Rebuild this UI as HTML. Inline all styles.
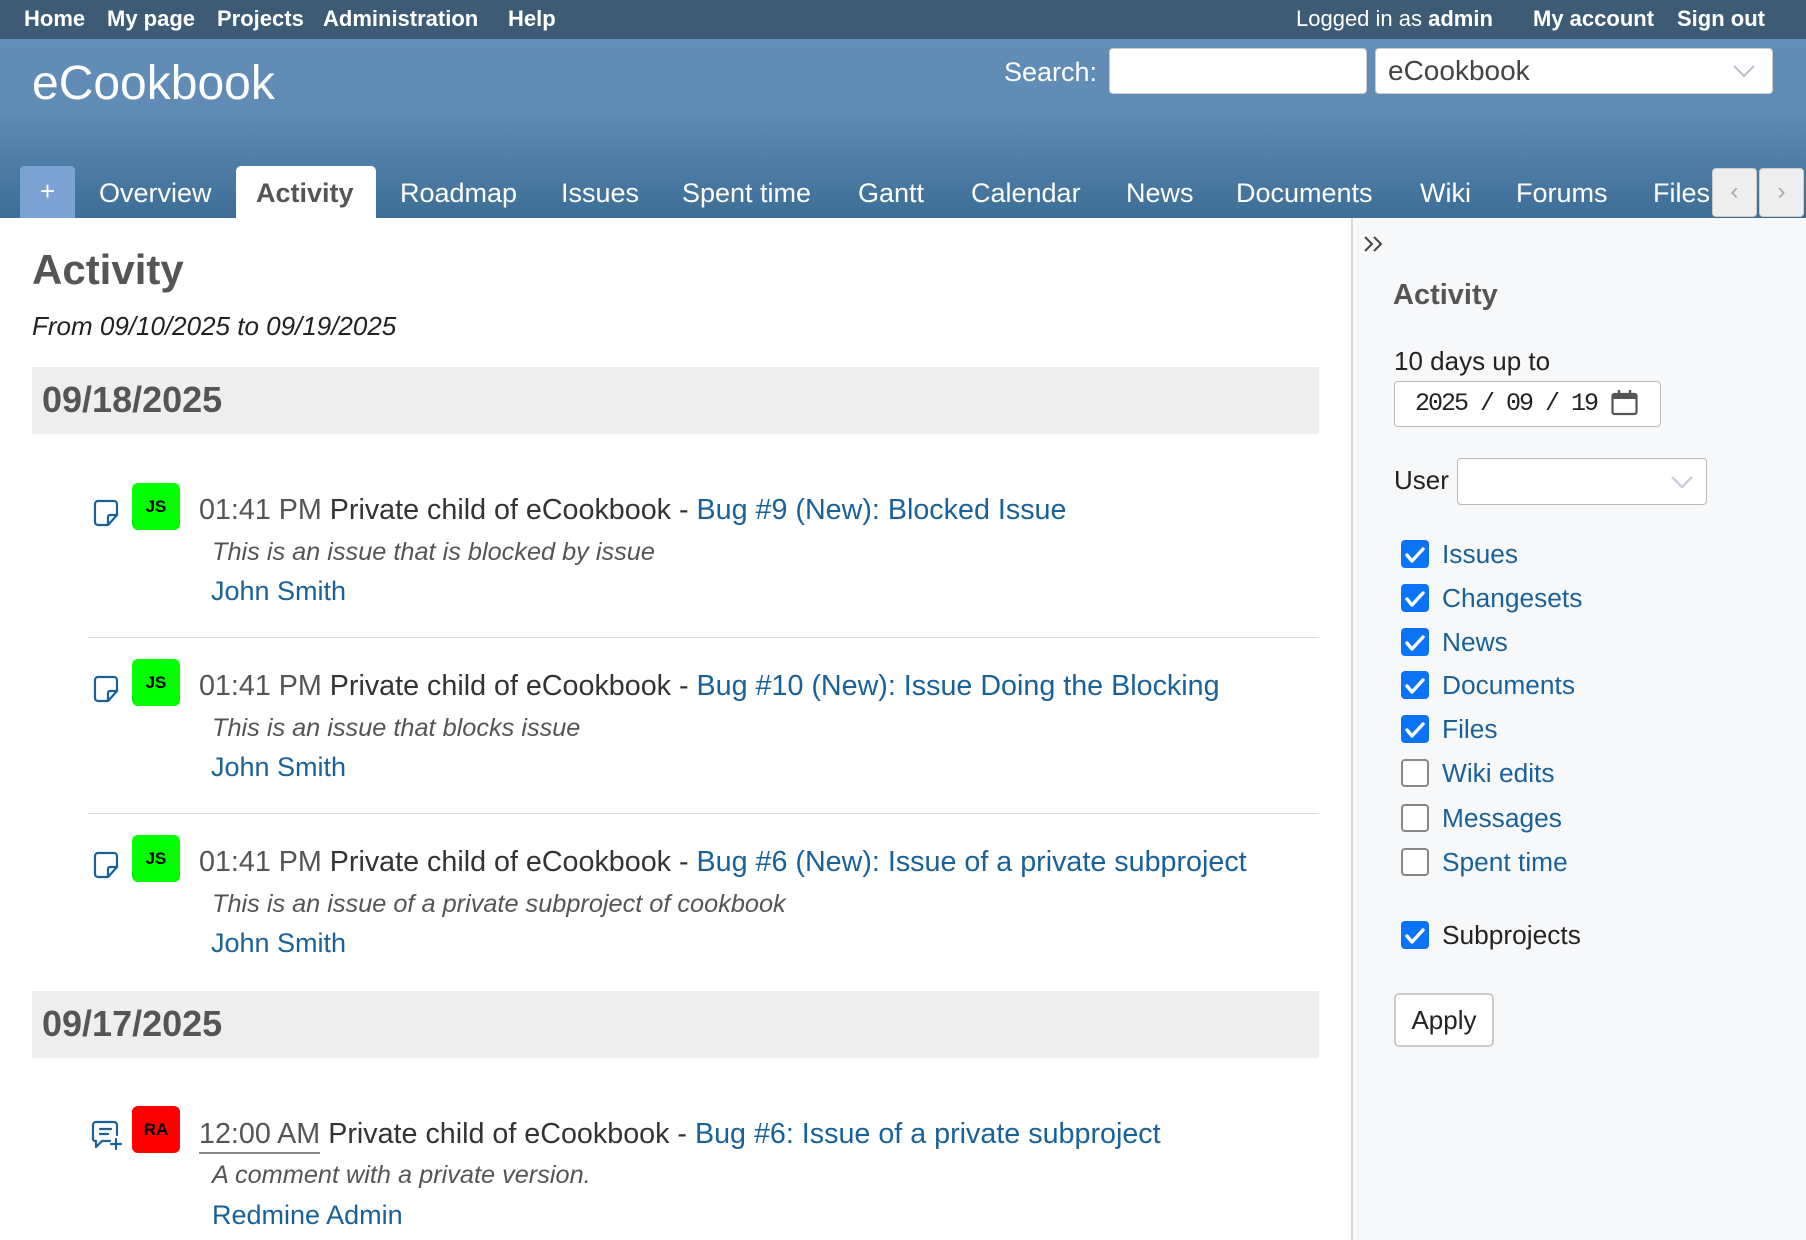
<!DOCTYPE html>
<html><head><meta charset="utf-8"><style>
*{margin:0;padding:0;box-sizing:border-box}
body{width:1806px;height:1240px;overflow:hidden;position:relative;background:#fff;font-family:"Liberation Sans",sans-serif;color:#333}
.t{position:absolute;white-space:nowrap;line-height:1}
#top{position:absolute;left:0;top:0;width:1806px;height:39px;background:#3e5b76}
#top .t{color:#fff;font-weight:bold;font-size:22px;top:8px}
#hdr{position:absolute;left:0;top:39px;width:1806px;height:179px;background:linear-gradient(#628db6 0%,#5f8bb5 40%,#3d6e96 100%)}
.tab{position:absolute;top:180px;color:#fff;font-size:27px;line-height:1;white-space:nowrap}
a{color:#1b6199;text-decoration:none}
.dh{position:absolute;left:32px;width:1287px;height:67px;background:#eee}
.dh span{position:absolute;left:10px;top:15px;font-size:36px;font-weight:bold;color:#555;line-height:1}
.av{position:absolute;left:132px;width:48px;height:47px;border-radius:6px;background:#00ff00;color:#000;font-weight:bold;font-size:17px;text-align:center;line-height:47px}
.ti{font-size:28.7px}
.ti .tm{color:#555}
.de{font-size:25.3px;font-style:italic;color:#555}
.au{font-size:27px}
.sep{position:absolute;left:88px;width:1231px;height:1px;background:#ddd}
#side{position:absolute;left:1351px;top:218px;width:455px;height:1022px;background:#f7f8fa;border-left:2px solid #d5d8dc}
.cb{position:absolute;left:1401px;width:28px;height:28px;border-radius:4px;background:#0b73f5}
.cb.off{background:#fff;border:2px solid #888}
.cl{position:absolute;left:1442px;font-size:26.3px;line-height:1;white-space:nowrap;color:#1b6199}
</style></head><body>
<div id="top">
<span class="t" style="left:24px">Home</span>
<span class="t" style="left:107px">My page</span>
<span class="t" style="left:217px">Projects</span>
<span class="t" style="left:323px">Administration</span>
<span class="t" style="left:508px">Help</span>
<span class="t" style="left:1296px;font-weight:normal">Logged in as <b>admin</b></span>
<span class="t" style="left:1533px">My account</span>
<span class="t" style="left:1677px">Sign out</span>
</div>
<div id="hdr"></div>
<span class="t" style="left:32px;top:60px;font-size:48px;color:#fff">eCookbook</span>
<span class="t" style="left:1004px;top:59px;font-size:27px;color:#fff">Search:</span>
<div style="position:absolute;left:1109px;top:48px;width:258px;height:46px;background:#fff;border:1px solid #ccc;border-radius:4px"></div>
<div style="position:absolute;left:1375px;top:48px;width:398px;height:46px;background:#fff;border:1px solid #ccc;border-radius:4px"></div>
<span class="t" style="left:1388px;top:57px;font-size:28px;color:#444">eCookbook</span>
<svg style="position:absolute;left:1733px;top:64px" width="22" height="14"><path d="M1 2 L11 12 L21 2" fill="none" stroke="#bbc" stroke-width="2"/></svg>
<div style="position:absolute;left:20px;top:166px;width:55px;height:52px;background:#7ba2d3;border-radius:4px 4px 0 0;color:#fff;font-size:26px;text-align:center;line-height:50px">+</div>
<div style="position:absolute;left:236px;top:166px;width:140px;height:52px;background:#fff;border-radius:5px 5px 0 0"></div>
<span class="tab" style="left:99px">Overview</span>
<span class="tab" style="left:256px;color:#555;font-weight:bold">Activity</span>
<span class="tab" style="left:400px">Roadmap</span>
<span class="tab" style="left:561px">Issues</span>
<span class="tab" style="left:682px">Spent time</span>
<span class="tab" style="left:858px">Gantt</span>
<span class="tab" style="left:971px">Calendar</span>
<span class="tab" style="left:1126px">News</span>
<span class="tab" style="left:1236px">Documents</span>
<span class="tab" style="left:1420px">Wiki</span>
<span class="tab" style="left:1516px">Forums</span>
<span class="tab" style="left:1653px">Files</span>
<div style="position:absolute;left:1712px;top:168px;width:45px;height:49px;background:#eee;border:1px solid #ccc;border-radius:4px;color:#aaa;font-size:24px;text-align:center;line-height:46px">‹</div>
<div style="position:absolute;left:1759px;top:168px;width:45px;height:49px;background:#eee;border:1px solid #ccc;border-radius:4px;color:#aaa;font-size:24px;text-align:center;line-height:46px">›</div>

<span class="t" style="left:32px;top:249px;font-size:42px;font-weight:bold;color:#555">Activity</span>
<span class="t" style="left:32px;top:313px;font-size:26px;font-style:italic;color:#222">From 09/10/2025 to 09/19/2025</span>

<div class="dh" style="top:367px"><span>09/18/2025</span></div>
<div class="dh" style="top:991px"><span>09/17/2025</span></div>

<svg style="position:absolute;left:92px;top:499px" width="28" height="28" viewBox="0 0 28 28"><path d="M3 5 a3 3 0 0 1 3-3 h16 a3 3 0 0 1 3 3 v11 l-9 10 h-10 a3 3 0 0 1 -3-3 z M25 16 h-7 a2 2 0 0 0 -2 2 v8" fill="none" stroke="#1b6199" stroke-width="2.2" stroke-linejoin="round"/></svg>
<div class="av" style="top:483px">JS</div>
<span class="t ti" style="left:199px;top:496px"><span class="tm">01:41 PM</span> Private child of eCookbook - <a>Bug #9 (New): Blocked Issue</a></span>
<span class="t de" style="left:212px;top:540px">This is an issue that is blocked by issue</span>
<span class="t au" style="left:211px;top:578px"><a>John Smith</a></span>
<div class="sep" style="top:637px"></div>

<svg style="position:absolute;left:92px;top:675px" width="28" height="28" viewBox="0 0 28 28"><path d="M3 5 a3 3 0 0 1 3-3 h16 a3 3 0 0 1 3 3 v11 l-9 10 h-10 a3 3 0 0 1 -3-3 z M25 16 h-7 a2 2 0 0 0 -2 2 v8" fill="none" stroke="#1b6199" stroke-width="2.2" stroke-linejoin="round"/></svg>
<div class="av" style="top:659px">JS</div>
<span class="t ti" style="left:199px;top:672px"><span class="tm">01:41 PM</span> Private child of eCookbook - <a>Bug #10 (New): Issue Doing the Blocking</a></span>
<span class="t de" style="left:212px;top:716px">This is an issue that blocks issue</span>
<span class="t au" style="left:211px;top:754px"><a>John Smith</a></span>
<div class="sep" style="top:813px"></div>

<svg style="position:absolute;left:92px;top:851px" width="28" height="28" viewBox="0 0 28 28"><path d="M3 5 a3 3 0 0 1 3-3 h16 a3 3 0 0 1 3 3 v11 l-9 10 h-10 a3 3 0 0 1 -3-3 z M25 16 h-7 a2 2 0 0 0 -2 2 v8" fill="none" stroke="#1b6199" stroke-width="2.2" stroke-linejoin="round"/></svg>
<div class="av" style="top:835px">JS</div>
<span class="t ti" style="left:199px;top:848px"><span class="tm">01:41 PM</span> Private child of eCookbook - <a>Bug #6 (New): Issue of a private subproject</a></span>
<span class="t de" style="left:212px;top:892px">This is an issue of a private subproject of cookbook</span>
<span class="t au" style="left:211px;top:930px"><a>John Smith</a></span>

<svg style="position:absolute;left:91px;top:1120px" width="32" height="32" viewBox="0 0 32 32"><path d="M5 2 h18 a3 3 0 0 1 3 3 v10 M19 21 h-8 l-6 6 v-6 h-1 a2 2 0 0 1 -2-2 v-14 a3 3 0 0 1 3-3 M9 9 h11 M9 14 h8 M25 19 v10 M20 24 h10" fill="none" stroke="#1b6199" stroke-width="2.2" stroke-linecap="round" stroke-linejoin="round"/></svg>
<div class="av" style="top:1106px;background:#f00">RA</div>
<span class="t ti" style="left:199px;top:1120px"><span class="tm" style="border-bottom:2px solid #888;padding-bottom:2px">12:00 AM</span> Private child of eCookbook - <a>Bug #6: Issue of a private subproject</a></span>
<span class="t de" style="left:212px;top:1163px">A comment with a private version.</span>
<span class="t au" style="left:212px;top:1202px"><a>Redmine Admin</a></span>

<div id="side"></div>
<svg style="position:absolute;left:1363px;top:235px" width="22" height="18" viewBox="0 0 22 18"><path d="M2 2 l7 7 -7 7 M11 2 l7 7 -7 7" fill="none" stroke="#444" stroke-width="2"/></svg>
<span class="t" style="left:1393px;top:281px;font-size:29px;font-weight:bold;color:#555">Activity</span>
<span class="t" style="left:1394px;top:348px;font-size:26px;color:#222">10 days up to</span>
<div style="position:absolute;left:1394px;top:381px;width:267px;height:46px;background:#fff;border:1px solid #bbb;border-radius:4px"></div>
<span class="t" style="left:1415px;top:391px;font-size:25px;letter-spacing:-2px;font-family:'Liberation Mono',monospace;color:#222">2025 / 09 / 19</span>
<svg style="position:absolute;left:1611px;top:389px" width="27" height="27" viewBox="0 0 27 27"><rect x="1.5" y="5" width="24" height="20" rx="2" fill="none" stroke="#555" stroke-width="2.2"/><rect x="1.5" y="5" width="24" height="5" fill="#555"/><path d="M8 1v6M19 1v6" stroke="#555" stroke-width="2.4"/></svg>
<span class="t" style="left:1394px;top:467px;font-size:26px;color:#222">User</span>
<div style="position:absolute;left:1457px;top:458px;width:250px;height:47px;background:#fff;border:1px solid #bbb;border-radius:4px"></div>
<svg style="position:absolute;left:1671px;top:476px" width="22" height="13"><path d="M1 1 L11 11 L21 1" fill="none" stroke="#ccd" stroke-width="2.4"/></svg>

<div class="cb" style="top:540px"></div><span class="cl" style="top:541px">Issues</span>
<div class="cb" style="top:584px"></div><span class="cl" style="top:585px">Changesets</span>
<div class="cb" style="top:628px"></div><span class="cl" style="top:629px">News</span>
<div class="cb" style="top:671px"></div><span class="cl" style="top:672px">Documents</span>
<div class="cb" style="top:715px"></div><span class="cl" style="top:716px">Files</span>
<div class="cb off" style="top:759px"></div><span class="cl" style="top:760px">Wiki edits</span>
<div class="cb off" style="top:804px"></div><span class="cl" style="top:805px">Messages</span>
<div class="cb off" style="top:848px"></div><span class="cl" style="top:849px">Spent time</span>
<div class="cb" style="top:921px"></div><span class="cl" style="top:922px;color:#222">Subprojects</span>
<svg style="position:absolute;left:0;top:0;pointer-events:none" width="1806" height="1240">
<g fill="none" stroke="#fff" stroke-width="3.4" stroke-linecap="round" stroke-linejoin="round">
<path d="M1407 555 l5 6 l11-12"/><path d="M1407 599 l5 6 l11-12"/><path d="M1407 643 l5 6 l11-12"/><path d="M1407 686 l5 6 l11-12"/><path d="M1407 730 l5 6 l11-12"/><path d="M1407 936 l5 6 l11-12"/>
</g></svg>
<div style="position:absolute;left:1394px;top:993px;width:100px;height:54px;background:#fff;border:2px solid #ccc;border-radius:5px;font-size:26px;color:#222;text-align:center;line-height:50px">Apply</div>
</body></html>
